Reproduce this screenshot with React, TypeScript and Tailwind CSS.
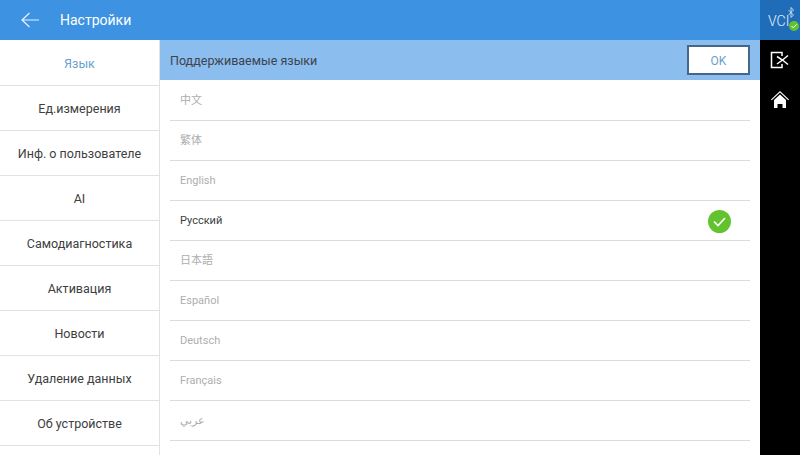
import React from 'react';

const menu = ['Язык', 'Ед.измерения', 'Инф. о пользователе', 'AI', 'Самодиагностика', 'Активация', 'Новости', 'Удаление данных', 'Об устройстве'];

const languages = ['中文', '繁体', 'English', 'Русский', '日本語', 'Español', 'Deutsch', 'Français', 'عربي', 'Italiano'];

const App: React.FC = () => {
  return (
    <div className="flex h-[455px] w-[800px] overflow-hidden bg-white font-['Roboto','Noto_Sans_CJK_SC',sans-serif]">
      <div className="flex w-[760px] flex-col">
        {/* Title bar */}
        <div className="flex h-10 shrink-0 items-center bg-[#3d93e2] pl-[21px]">
          <svg width="18" height="16" viewBox="0 0 18 16" fill="none" stroke="#e8f2fc" strokeWidth="1.2">
            <path d="M18 8H1M8.5 1L1 8l7.5 7" />
          </svg>
          <span className="ml-[21px] text-[14px] text-white">Настройки</span>
        </div>

        <div className="flex min-h-0 flex-1">
          {/* Left menu */}
          <div className="w-40 shrink-0 border-r border-[#e2e2e2] pt-px">
            {menu.map((item, i) => (
              <div
                key={item}
                className={`flex h-[45px] items-center justify-center border-b border-[#e2e2e2] pt-[2px] text-[12.5px] ${i === 0 ? 'text-[#6a9fce]' : 'text-[#404040]'}`}
              >
                {item}
              </div>
            ))}
          </div>

          {/* Language list */}
          <div className="flex min-w-0 flex-1 flex-col">
            <div className="flex h-10 shrink-0 items-center justify-between bg-[#8bbdee] px-2.5">
              <span className="pt-[3px] text-[12.5px] text-[#3c444d]">Поддерживаемые языки</span>
              <div className="flex h-[30px] w-[63px] items-center justify-center border-2 border-[#46668c] bg-white pt-px text-[12px] text-[#6a9fce]">
                OK
              </div>
            </div>
            <div className="px-2.5 pt-px">
              {languages.map((lang, i) => (
                <div key={i} className="flex h-10 items-center justify-between border-b border-[#dcdcdc] pl-2.5 pr-[19px] pt-[1px] text-[11px]">
                  <span className={i === 3 ? 'text-[#404040]' : 'text-[#aeaeae]'}>{lang}</span>
                  {i === 3 && (
                    <svg width="23" height="23" viewBox="0 0 23 23">
                      <circle cx="11.5" cy="11.5" r="11.5" fill="#62c32f" />
                      <path d="M6 11.5l4 4 7-7.5" fill="none" stroke="#fff" strokeWidth="1.6" />
                    </svg>
                  )}
                </div>
              ))}
            </div>
          </div>
        </div>
      </div>

      {/* Side bar */}
      <div className="flex w-10 shrink-0 flex-col items-center bg-black">
        <div className="relative h-10 w-10 bg-[#1f6cb8] pl-[8px] pt-[14px]">
          <span className="block text-[14px] font-light leading-none text-[#e8f2fc]">VCI</span>
          <svg className="absolute right-[6px] top-[7px]" width="6" height="11" viewBox="0 0 6 11" fill="none" stroke="#e8f2fc" strokeWidth="0.8">
            <path d="M0.5 3l5 5-2.5 2.5v-10L5.5 3l-5 5" />
          </svg>
          <svg className="absolute bottom-[9px] right-[1px]" width="10" height="10" viewBox="0 0 10 10">
            <circle cx="5" cy="5" r="5" fill="#62c32f" />
            <path d="M2.5 5l1.8 1.8L7.6 3.4" fill="none" stroke="#fff" strokeWidth="1" />
          </svg>
        </div>
        <svg className="mt-[10px]" width="20" height="20" viewBox="0 0 20 20" fill="none" stroke="#fff" strokeWidth="1.5">
          <path d="M12 6V2.500H1.500v15H12V14" />
          <path d="M7 6.500l5.500 3.500L18 14.500" />
          <path d="M7 14l5.500-4L18 5.500" />
        </svg>
        <svg className="mt-[21px]" width="18" height="18" viewBox="0 0 18 18">
          <path d="M9 0L0 8.500l.8.8L9 1.600l8.200 7.700.8-.8z" fill="#fff" />
          <path d="M3 9l6-5.600L15 9v8h-3.500v-4h-5v4H3z" fill="#fff" />
        </svg>
      </div>
    </div>
  );
};

export default App;
